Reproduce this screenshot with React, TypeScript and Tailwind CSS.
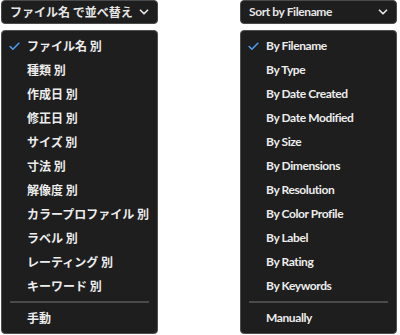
import { Check, ChevronDown } from "lucide-react";

type Menu = {
  label: string;
  items: string[];
  last: string;
  font: string;
};

const menus: Menu[] = [
  {
    label: "ファイル名 で並べ替え",
    items: [
      "ファイル名 別",
      "種類 別",
      "作成日 別",
      "修正日 別",
      "サイズ 別",
      "寸法 別",
      "解像度 別",
      "カラープロファイル 別",
      "ラベル 別",
      "レーティング 別",
      "キーワード 別",
    ],
    last: "手動",
    font: "font-['Noto_Sans_CJK_JP',sans-serif]",
  },
  {
    label: "Sort by Filename",
    items: [
      "By Filename",
      "By Type",
      "By Date Created",
      "By Date Modified",
      "By Size",
      "By Dimensions",
      "By Resolution",
      "By Color Profile",
      "By Label",
      "By Rating",
      "By Keywords",
    ],
    last: "Manually",
    font: "font-['Lato',sans-serif] tracking-[-0.4px]",
  },
];

function SortMenu({ menu }: { menu: Menu }) {
  return (
    <div className={`flex w-[157px] flex-col ${menu.font}`}>
      {/* trigger */}
      <div className="flex h-[24px] items-center justify-between rounded-[4px] border border-[#4a4a4a] bg-[#1e1e1e] pl-[8px] pr-[6px]">
        <span className="text-[12px] font-bold leading-none text-[#e6e6e6]">
          {menu.label}
        </span>
        <ChevronDown size={14} strokeWidth={3} className="text-[#e6e6e6]" />
      </div>

      {/* dropdown */}
      <div className="mt-[6px] flex h-[304px] flex-col rounded-[4px] border border-[#4f4f4f] bg-[#1e1e1e] pt-[3px]">
        {menu.items.map((item, i) => (
          <div key={item} className="relative flex h-[24px] items-center pl-[25px]">
            {i === 0 && (
              <Check
                size={13}
                strokeWidth={3}
                className="absolute left-[6px] text-[#4b9bf2]"
              />
            )}
            <span className="text-[12px] font-bold leading-none text-[#ededed]">
              {item}
            </span>
          </div>
        ))}
        <div className="mx-[8px] my-[3px] h-[2px] bg-[#4a4a4a]" />
        <div className="flex h-[24px] items-center pl-[25px]">
          <span className="text-[12px] font-bold leading-none text-[#ededed]">
            {menu.last}
          </span>
        </div>
      </div>
    </div>
  );
}

export default function App() {
  return (
    <div className="flex h-[335px] w-[400px] justify-between bg-white pl-[1px] pr-[3px]">
      <SortMenu menu={menus[0]} />
      <SortMenu menu={menus[1]} />
    </div>
  );
}
